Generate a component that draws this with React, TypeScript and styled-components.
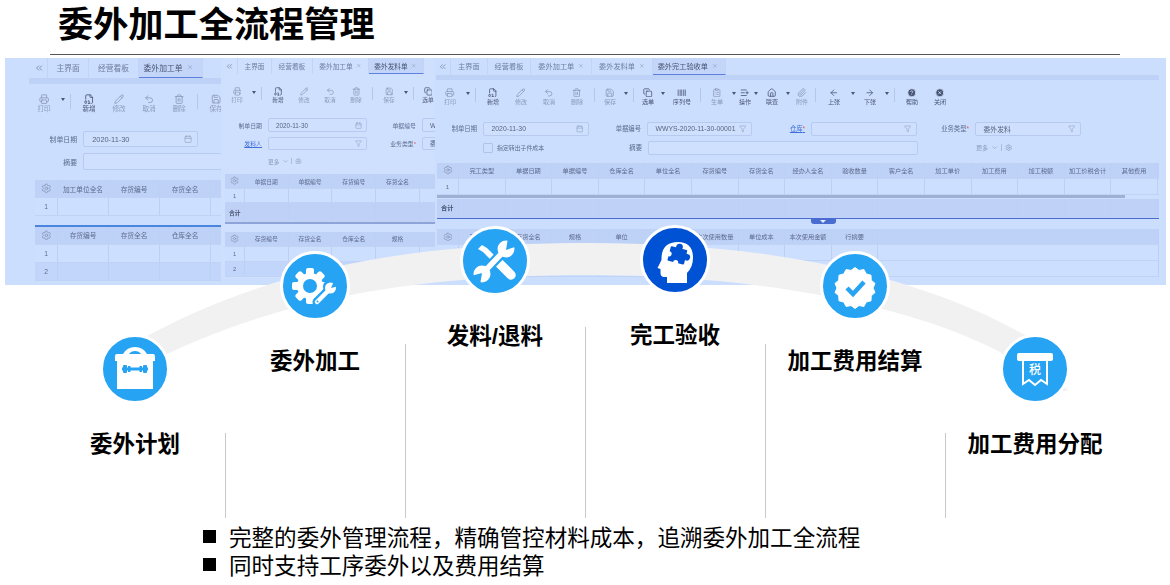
import type { ReactNode } from "react";
import styled, { createGlobalStyle } from "styled-components";
import {
  ArrowLeft,
  ArrowRight,
  Barcode,
  Calendar,
  ChevronDown,
  ChevronsLeft,
  CircleHelp,
  CircleX,
  ClipboardList,
  Copy,
  FileDigit,
  Filter,
  House,
  ListPlus,
  Paperclip,
  Pencil,
  Printer,
  Save,
  Settings,
  Trash2,
  Undo2,
  X,
} from "lucide-react";

const GlobalStyle = createGlobalStyle`
  html, body { margin: 0; padding: 0; background: #fff; }
  body { font-family: "Liberation Sans", "Noto Sans CJK SC", sans-serif; overflow: hidden; }
`;

/* ---------- slide frame ---------- */

const Page = styled.div`
  width: 1170px;
  height: 585px;
  display: flex;
  flex-direction: column;
  color: #000;
`;

const Title = styled.h1`
  margin: 0;
  height: 54px;
  padding-left: 58px;
  font-size: 35.2px;
  line-height: 50px;
  font-weight: 700;
  letter-spacing: 0;
`;

const Rule = styled.div`
  width: 1070px;
  height: 1px;
  margin: 0 0 3px 50px;
  background: #555;
`;

const Stage = styled.div`
  position: relative;
  height: 460px;
`;

const Panel = styled.div`
  position: absolute;
  left: 5px;
  top: 0;
  width: 1161px;
  height: 227px;
  overflow: hidden;
  background: #cbdefe;
  filter: blur(0.35px);
`;

const ArcSvg = styled.svg`
  position: absolute;
  left: 0;
  top: 0;
`;

const Steps = styled.div`
  position: absolute;
  left: 45px;
  top: 0;
  height: 460px;
  display: grid;
  grid-template-columns: repeat(6, 180px);
`;

const Step = styled.div<{ $top: number }>`
  position: relative;
  padding-top: ${(p) => p.$top}px;
  display: flex;
  flex-direction: column;
  align-items: center;
`;

const Divider = styled.div<{ $top: number }>`
  position: absolute;
  left: 0;
  top: ${(p) => p.$top}px;
  bottom: 0;
  width: 1px;
  background: #c9c9c9;
`;

const Badge = styled.div<{ $dark?: boolean }>`
  width: 64px;
  height: 64px;
  box-sizing: content-box;
  border: 3px solid #fff;
  border-radius: 50%;
  background: ${(p) => (p.$dark ? "#0052d4" : "#26a3f2")};
  svg { display: block; }
`;

const StepLabel = styled.div`
  margin-top: 26px;
  height: 30px;
  font-size: 22.5px;
  line-height: 30px;
  font-weight: 700;
  white-space: nowrap;
`;

const Bullets = styled.ul`
  list-style: none;
  margin: 4px 0 0;
  padding: 0 0 0 203px;
`;

const Bullet = styled.li`
  display: flex;
  align-items: center;
  gap: 13px;
  height: 28px;
  font-size: 22.55px;
  white-space: nowrap;
  &::before {
    content: "";
    width: 13px;
    height: 13px;
    background: #000;
  }
`;

/* ---------- software screens behind the diagram ---------- */

const Screen = styled.div<{ $left: number; $width: number; $height: number; $size: number; $pad: number; $bg: string }>`
  position: absolute;
  left: ${(p) => p.$left}px;
  top: 0;
  width: ${(p) => p.$width}px;
  height: ${(p) => p.$height}px;
  overflow: hidden;
  background: ${(p) => p.$bg};
  font-size: ${(p) => p.$size}px;
  color: #5d6c8e;
  padding-left: ${(p) => p.$pad}px;
  box-sizing: border-box;
`;

const TabBar = styled.div<{ $h: number; $pad: number }>`
  display: flex;
  height: ${(p) => p.$h}px;
  margin-left: -${(p) => p.$pad}px;
`;

const TabChevron = styled.div<{ $w: number }>`
  width: ${(p) => p.$w}px;
  flex: none;
  display: flex;
  align-items: center;
  justify-content: flex-end;
  padding-right: 3px;
  box-sizing: border-box;
  color: #7686a6;
  border-right: 1px solid #c2d4f6;
  svg { width: 1.3em; height: 1.3em; }
`;

const Tab = styled.div<{ $active?: boolean; $tabPad: number }>`
  display: flex;
  align-items: center;
  flex: none;
  gap: 0.55em;
  padding: 0 ${(p) => p.$tabPad}px 0 ${(p) => (p.$active ? 5 : p.$tabPad)}px;
  white-space: nowrap;
  border-right: 1px solid #c2d4f6;
  box-sizing: border-box;
  color: ${(p) => (p.$active ? "#46526f" : "#6f7e9e")};
  background: ${(p) => (p.$active ? "#c3d6fa" : "transparent")};
  border-bottom: 1px solid ${(p) => (p.$active ? "#5c80de" : "transparent")};
  svg { width: 0.8em; height: 0.8em; color: #8594b2; }
`;

const Band = styled.div<{ $h: number; $w?: number }>`
  height: ${(p) => p.$h}px;
  width: ${(p) => (p.$w ? `${p.$w}px` : "auto")};
  background: #bed1f6;
`;

const Toolbar = styled.div<{ $mt: number; $h: number }>`
  display: flex;
  align-items: flex-start;
  margin-top: ${(p) => p.$mt}px;
  height: ${(p) => p.$h}px;
`;

const ToolGroup = styled.div`
  display: flex;
  align-items: flex-start;
  flex: none;
`;

const ToolItem = styled.div<{ $w: number; $on?: boolean }>`
  width: ${(p) => p.$w}px;
  flex: none;
  display: flex;
  flex-direction: column;
  align-items: center;
  font-size: 0.85em;
  line-height: 1.15;
  white-space: nowrap;
  color: ${(p) => (p.$on ? "#4a5672" : "#8c9aba")};
  svg { width: 1.55em; height: 1.55em; margin-bottom: 1px; flex: none; }
`;

const ToolCaret = styled.div`
  width: 8px;
  flex: none;
  margin-top: 0.55em;
  display: flex;
  justify-content: center;
  &::before {
    content: "";
    border-left: 2.5px solid transparent;
    border-right: 2.5px solid transparent;
    border-top: 3px solid #4a5672;
  }
`;

const ToolSep = styled.div`
  width: 1px;
  height: 1.9em;
  flex: none;
  margin: 0 3px;
  background: #b4c6ea;
`;

const Form = styled.div<{ $mt: number; $gap: number }>`
  display: flex;
  flex-direction: column;
  gap: ${(p) => p.$gap}px;
  margin-top: ${(p) => p.$mt}px;
`;

const FormRow = styled.div<{ $h: number }>`
  display: flex;
  align-items: center;
  height: ${(p) => p.$h}px;
`;

const FieldLabel = styled.div<{ $w: number; $link?: boolean }>`
  width: ${(p) => p.$w}px;
  flex: none;
  margin-right: 6px;
  text-align: right;
  white-space: nowrap;
  font-size: 0.88em;
  color: ${(p) => (p.$link ? "#3f6fd8" : "#5d6c8e")};
  text-decoration: ${(p) => (p.$link ? "underline" : "none")};
  i { color: #e2574c; font-style: normal; }
`;

const FieldInput = styled.div<{ $w: number }>`
  width: ${(p) => p.$w}px;
  height: 100%;
  flex: none;
  box-sizing: border-box;
  display: flex;
  align-items: center;
  justify-content: space-between;
  padding: 0 0.7em 0 1.1em;
  border: 1px solid #b7caf2;
  border-radius: 2px;
  background: #cfe0fe;
  white-space: nowrap;
  color: #56647f;
  font-size: 0.95em;
  svg { width: 1.1em; height: 1.1em; color: #93a4c6; flex: none; }
`;

const Check = styled.div<{ $ml: number; $w: number }>`
  display: flex;
  align-items: center;
  gap: 4px;
  flex: none;
  margin-left: ${(p) => p.$ml}px;
  width: ${(p) => p.$w}px;
  white-space: nowrap;
  font-size: 0.82em;
  &::before {
    content: "";
    width: 8px;
    height: 8px;
    border: 1px solid #b0c3ea;
    border-radius: 1px;
  }
`;

const More = styled.div<{ $ml: number }>`
  display: flex;
  align-items: center;
  gap: 0.45em;
  margin-left: ${(p) => p.$ml}px;
  font-size: 0.85em;
  color: #8c9aba;
  white-space: nowrap;
  svg { width: 1.2em; height: 1.2em; }
  span { width: 1px; height: 1.2em; background: #a9bbe2; }
`;

const TableWrap = styled.div<{ $mt: number; $ml: number; $w: number }>`
  position: relative;
  margin-top: ${(p) => p.$mt}px;
  margin-left: ${(p) => p.$ml}px;
  width: ${(p) => p.$w}px;
`;

const Row = styled.div<{ $h: number; $kind: "head" | "plain" | "alt" | "sum" }>`
  display: flex;
  height: ${(p) => p.$h}px;
  background: ${(p) =>
    p.$kind === "head" ? "#bed1f7" : p.$kind === "plain" ? "#cddffe" : p.$kind === "alt" ? "#c2d5fa" : "#bfd1f6"};
  border-bottom: 1px solid #c0d3f7;
  box-sizing: border-box;
  font-size: 0.86em;
`;

const Cell = styled.div<{ $w: number; $left?: boolean }>`
  width: ${(p) => p.$w}px;
  flex: none;
  box-sizing: border-box;
  display: flex;
  align-items: center;
  justify-content: ${(p) => (p.$left ? "flex-start" : "center")};
  padding-left: ${(p) => (p.$left ? "4px" : "0")};
  border-right: 1px solid #bccff5;
  white-space: nowrap;
  overflow: visible;
  svg { width: 1.6em; height: 1.6em; color: #7d8cab; }
  b { color: #46526f; }
`;

const ScrollTrack = styled.div`
  height: 4px;
  background: #cddffe;
`;

const ScrollThumb = styled.div<{ $w: number }>`
  width: ${(p) => p.$w}px;
  height: 3px;
  background: #9fb0d4;
`;

const SplitLine = styled.div<{ $color: string }>`
  position: relative;
  height: 1.5px;
  background: ${(p) => p.$color};
`;

const SplitHandle = styled.div`
  position: absolute;
  left: 374px;
  top: 1px;
  width: 25px;
  height: 5px;
  background: #4a6bd0;
  border-radius: 0 0 3px 3px;
  &::after {
    content: "";
    position: absolute;
    left: 9px;
    top: 1px;
    border-left: 3px solid transparent;
    border-right: 3px solid transparent;
    border-top: 3px solid #e6eeff;
  }
`;

/* ---------- small helpers ---------- */

type ToolDef = { label: string; icon: ReactNode; w: number; on?: boolean; caret?: boolean } | "sep";

const print = { label: "打印", icon: <Printer /> };
const add = { label: "新增", icon: <FileDigit />, on: true };
const edit = { label: "修改", icon: <Pencil /> };
const undo = { label: "取消", icon: <Undo2 /> };
const del = { label: "删除", icon: <Trash2 /> };
const save = { label: "保存", icon: <Save /> };
const pick = { label: "选单", icon: <Copy />, on: true };

const Tools = ({ items, mt, h }: { items: ToolDef[]; mt: number; h: number }) => (
  <Toolbar $mt={mt} $h={h}>
    {items.map((t, i) =>
      t === "sep" ? (
        <ToolSep key={i} />
      ) : (
        <ToolGroup key={i}>
          <ToolItem $w={t.w} $on={t.on}>
            {t.icon}
            {t.label}
          </ToolItem>
          {t.caret && <ToolCaret />}
        </ToolGroup>
      )
    )}
  </Toolbar>
);

const Tabs = ({
  names,
  active,
  h,
  chevron,
  tabPad,
  pad,
}: {
  names: string[];
  active: string;
  h: number;
  chevron: number;
  tabPad: number;
  pad: number;
}) => (
  <TabBar $h={h} $pad={pad}>
    <TabChevron $w={chevron}>
      <ChevronsLeft />
    </TabChevron>
    {names.map((n, i) => (
      <Tab key={n} $active={n === active} $tabPad={tabPad}>
        {n}
        {i > 1 && <X />}
      </Tab>
    ))}
  </TabBar>
);

const Field = ({
  label,
  lw,
  iw,
  value,
  icon,
  link,
  required,
}: {
  label: string;
  lw: number;
  iw: number;
  value?: string;
  icon?: ReactNode;
  link?: boolean;
  required?: boolean;
}) => (
  <>
    <FieldLabel $w={lw} $link={link}>
      {label}
      {required && <i>*</i>}
    </FieldLabel>
    <FieldInput $w={iw}>
      <span>{value}</span>
      {icon}
    </FieldInput>
  </>
);

type RowDef = { h: number; kind: "plain" | "alt" | "sum"; label?: string };

const DataTable = ({
  cols,
  gearW,
  colW,
  headH,
  rows,
  fill,
}: {
  cols: string[];
  gearW: number;
  colW: number;
  headH: number;
  rows: RowDef[];
  fill: number;
}) => (
  <>
    <Row $h={headH} $kind="head">
      <Cell $w={gearW}>
        <Settings strokeWidth={1.5} />
      </Cell>
      {cols.map((c, i) => (
        <Cell key={i} $w={colW}>
          {c}
        </Cell>
      ))}
      {fill > 0 && <Cell $w={fill} />}
    </Row>
    {rows.map((r, i) => (
      <Row key={i} $h={r.h} $kind={r.kind}>
        <Cell $w={gearW} $left={r.kind === "sum"}>
          {r.kind === "sum" ? <b>{r.label}</b> : r.label}
        </Cell>
        {cols.map((_, j) => (
          <Cell key={j} $w={colW} />
        ))}
        {fill > 0 && <Cell $w={fill} />}
      </Row>
    ))}
  </>
);

const FirstScreen = () => (
  <Screen $left={0} $width={216} $height={227} $size={7.8} $pad={24} $bg="#cbdefe">
    <Tabs names={["主界面", "经营看板", "委外加工单"]} active="委外加工单" h={20} chevron={43} tabPad={8.5} pad={24} />
    <Band $h={6} />
    <Tools
      mt={10}
      h={22}
      items={[
        { ...print, w: 30, caret: true },
        "sep",
        { ...add, w: 30 },
        { ...edit, w: 30 },
        { ...undo, w: 30 },
        { ...del, w: 30 },
        "sep",
        { ...save, w: 30 },
      ]}
    />
    <Form $mt={15} $gap={6}>
      <FormRow $h={16}>
        <Field label="制单日期" lw={48} iw={115} value="2020-11-30" icon={<Calendar />} />
      </FormRow>
      <FormRow $h={17}>
        <Field label="摘要" lw={48} iw={200} />
      </FormRow>
    </Form>
    <TableWrap $mt={10} $ml={6} $w={300}>
      <DataTable
        cols={["加工单位全名", "存货编号", "存货全名", "仓库全名"]}
        gearW={23}
        colW={51}
        headH={18}
        fill={0}
        rows={[{ h: 18, kind: "plain", label: "1" }]}
      />
    </TableWrap>
    <TableWrap $mt={9} $ml={6} $w={300}>
      <SplitLine $color="#4a86e0" />
      <DataTable
        cols={["存货编号", "存货全名", "仓库全名", "规格"]}
        gearW={23}
        colW={51}
        headH={18}
        fill={0}
        rows={[
          { h: 18, kind: "plain", label: "1" },
          { h: 18, kind: "alt", label: "2" },
        ]}
      />
    </TableWrap>
  </Screen>
);

const SecondScreen = () => (
  <Screen $left={216} $width={214} $height={220} $size={6.7} $pad={3} $bg="#cfe0ff">
    <Tabs
      names={["主界面", "经营看板", "委外加工单", "委外发料单"]}
      active="委外发料单"
      h={16}
      chevron={17}
      tabPad={6.5}
      pad={3}
    />
    <Tools
      mt={13}
      h={18}
      items={[
        { ...print, w: 26, caret: true },
        "sep",
        { ...add, w: 26 },
        { ...edit, w: 26 },
        { ...undo, w: 26 },
        { ...del, w: 26 },
        "sep",
        { ...save, w: 26, caret: true },
        "sep",
        { ...pick, w: 22 },
      ]}
    />
    <Form $mt={13} $gap={5}>
      <FormRow $h={14}>
        <Field label="制单日期" lw={38} iw={99} value="2020-11-30" icon={<Calendar />} />
        <Field label="单据编号" lw={49} iw={60} value="W" />
      </FormRow>
      <FormRow $h={13}>
        <Field label="发料人" lw={38} iw={99} link icon={<Filter />} />
        <Field label="业务类型" lw={49} iw={60} value="委" required />
      </FormRow>
    </Form>
    <Form $mt={5} $gap={0}>
      <FormRow $h={12}>
        <More $ml={44}>
          更多 <ChevronDown /> <span /> <Settings />
        </More>
      </FormRow>
    </Form>
    <TableWrap $mt={7} $ml={1} $w={240}>
      <DataTable
        cols={["单据日期", "单据编号", "存货编号", "存货全名", "仓库"]}
        gearW={20}
        colW={43.7}
        headH={15}
        fill={0}
        rows={[
          { h: 14, kind: "plain", label: "1" },
          { h: 19, kind: "sum", label: "合计" },
        ]}
      />
      <SplitLine $color="#8ea4d8" />
    </TableWrap>
    <TableWrap $mt={8} $ml={1} $w={240}>
      <DataTable
        cols={["存货编号", "存货全名", "仓库全名", "规格", "单位"]}
        gearW={20}
        colW={43.7}
        headH={15}
        fill={0}
        rows={[
          { h: 15, kind: "plain", label: "1" },
          { h: 15, kind: "alt", label: "2" },
        ]}
      />
    </TableWrap>
  </Screen>
);

const ThirdScreen = () => (
  <Screen $left={430} $width={731} $height={227} $size={7.2} $pad={1} $bg="#cbdefe">
    <Tabs
      names={["主界面", "经营看板", "委外加工单", "委外发料单", "委外完工验收单"]}
      active="委外完工验收单"
      h={17}
      chevron={16}
      tabPad={7}
      pad={1}
    />
    <Band $h={5} $w={723} />
    <Tools
      mt={8}
      h={19}
      items={[
        { ...print, w: 28, caret: true },
        "sep",
        { ...add, w: 28 },
        { ...edit, w: 28 },
        { ...undo, w: 28 },
        { ...del, w: 28 },
        "sep",
        { ...save, w: 24, caret: true },
        "sep",
        { ...pick, w: 22, caret: true },
        { label: "序列号", icon: <Barcode />, w: 30, on: true },
        "sep",
        { label: "生单", icon: <ClipboardList />, w: 26, caret: true },
        { label: "操作", icon: <ListPlus />, w: 14, on: true, caret: true },
        { label: "联查", icon: <House />, w: 24, on: true, caret: true },
        { label: "附件", icon: <Paperclip />, w: 20 },
        "sep",
        { label: "上张", icon: <ArrowLeft />, w: 30, on: true, caret: true },
        { label: "下张", icon: <ArrowRight />, w: 26, on: true, caret: true },
        "sep",
        { label: "帮助", icon: <CircleHelp fill="#47536f" color="#cbdefe" />, w: 28, on: true },
        { label: "关闭", icon: <CircleX fill="#47536f" color="#cbdefe" />, w: 28, on: true },
      ]}
    />
    <Form $mt={15} $gap={5.5}>
      <FormRow $h={13.5}>
        <Field label="制单日期" lw={41} iw={106} value="2020-11-30" icon={<Calendar />} />
        <Field label="单据编号" lw={52} iw={105} value="WWYS-2020-11-30-00001" icon={<Filter />} />
        <Field label="仓库" lw={53} iw={106} link required icon={<Filter />} />
        <Field label="业务类型" lw={52} iw={106} value="委外发料" required icon={<Filter />} />
      </FormRow>
      <FormRow $h={13.5}>
        <Check $ml={47} $w={106}>
          指定转出子件成本
        </Check>
        <Field label="摘要" lw={53} iw={270} />
        <More $ml={58}>
          更多 <ChevronDown /> <span /> <Settings />
        </More>
      </FormRow>
    </Form>
    <TableWrap $mt={8} $ml={1} $w={722}>
      <DataTable
        cols={[
          "完工类型",
          "单据日期",
          "单据编号",
          "仓库全名",
          "单位全名",
          "存货编号",
          "存货全名",
          "经办人全名",
          "验收数量",
          "客户全名",
          "加工单价",
          "加工费用",
          "加工税额",
          "加工价税合计",
          "其他费用",
        ]}
        gearW={22}
        colW={46.6}
        headH={16}
        fill={0}
        rows={[{ h: 16, kind: "plain", label: "1" }]}
      />
      <ScrollTrack>
        <ScrollThumb $w={688} />
      </ScrollTrack>
      <Row $h={19} $kind="sum">
        <Cell $w={22} $left>
          <b>合计</b>
        </Cell>
        {Array.from({ length: 15 }, (_, j) => (
          <Cell key={j} $w={46.6} />
        ))}
      </Row>
      <SplitLine $color="#4a6bd0">
        <SplitHandle />
      </SplitLine>
    </TableWrap>
    <TableWrap $mt={10} $ml={1} $w={722}>
      <DataTable
        cols={["存货编号", "存货全名", "规格", "单位", "", "本次使用数量", "单位成本", "本次使用金额", "行摘要"]}
        gearW={22}
        colW={46.6}
        headH={16}
        fill={281}
        rows={[{ h: 16, kind: "plain" }, { h: 16, kind: "plain" }]}
      />
    </TableWrap>
  </Screen>
);

/* ---------- step icons ---------- */

const BLUE = "#26a3f2";
const DEEP = "#0052d4";

const teeth = Array.from({ length: 8 }, (_, i) => i * 45);

const burst = Array.from({ length: 28 }, (_, i) => {
  const a = (i / 28) * Math.PI * 2;
  const r = i % 2 ? 18 : 20.5;
  return `${33 + r * Math.sin(a)},${35 - r * Math.cos(a)}`;
}).join(" ");

const IconFrame = ({ children }: { children: ReactNode }) => (
  <svg width="64" height="64" viewBox="1 1 64 64">
    {children}
  </svg>
);

const ToolboxIcon = () => (
  <IconFrame>
    <path
      d="M13 20 Q13 18 15 18 H21 Q25 11 33 11 Q41 11 45 18 H51 Q53 18 53 20 V25 H51 V53 H15 V25 H13 Z"
      fill="#fff"
    />
    <path d="M27 18 Q29 15 33 15 Q37 15 39 18 Z" fill={BLUE} />
    <rect x="20" y="31.5" width="26" height="3" fill={BLUE} />
    <rect x="21" y="29" width="4" height="8" rx="1" fill={BLUE} />
    <rect x="26" y="30" width="2.5" height="6" fill={BLUE} />
    <rect x="37.5" y="30" width="2.5" height="6" fill={BLUE} />
    <rect x="41" y="29" width="4" height="8" rx="1" fill={BLUE} />
  </IconFrame>
);

const GearIcon = () => (
  <IconFrame>
    <g fill="#fff">
      {teeth.map((a) => (
        <rect key={a} x="24" y="15" width="8" height="8" rx="2" transform={`rotate(${a} 28 33)`} />
      ))}
      <circle cx="28" cy="33" r="13" />
    </g>
    <circle cx="28" cy="33" r="7" fill={BLUE} />
    <path d="M35 49 L47 37" stroke={BLUE} strokeWidth="9" strokeLinecap="round" />
    <circle cx="49" cy="34" r="8" fill={BLUE} />
    <path d="M35 49 L46 38" stroke="#fff" strokeWidth="4.5" strokeLinecap="round" />
    <circle cx="48.5" cy="35" r="5.5" fill="#fff" />
    <path d="M49 35 L52 28 L57 33 Z" fill={BLUE} />
    <circle cx="35.5" cy="48.5" r="1" fill={BLUE} />
  </IconFrame>
);

const ToolsIcon = () => (
  <IconFrame>
    <path d="M16 21 L20 17 L25 20 L38 33 L34 37 L21 24 Z" fill="#fff" />
    <path d="M38 36 L49 47" stroke="#fff" strokeWidth="9.5" strokeLinecap="round" />
    <path d="M20 46 L44 21" stroke={BLUE} strokeWidth="10" />
    <path d="M21 45 L43 22" stroke="#fff" strokeWidth="5.5" />
    <circle cx="44" cy="21" r="8.5" fill="#fff" />
    <path d="M44 22 L46 10 L56 18 Z" fill={BLUE} />
    <circle cx="20" cy="46" r="8.5" fill="#fff" />
    <path d="M20 45 L18 57 L9 48 Z" fill={BLUE} />
  </IconFrame>
);

const HeadIcon = () => (
  <IconFrame>
    <path
      d="M25 56 V50 H21.5 Q18.5 49.5 18.5 46 V42 L15.5 41 L19.5 33 Q19 15 36 15 Q51 15 51 31 Q51 40 45 46 V56 Z"
      fill="#fff"
    />
    <g transform="rotate(14 36 28)">
      <g fill={DEEP}>
        <rect x="27" y="21" width="17" height="15" rx="1" />
        <circle cx="35.5" cy="20" r="3.4" />
        <circle cx="45" cy="28" r="3.4" />
      </g>
      <circle cx="27" cy="29" r="2.6" fill="#fff" />
      <circle cx="35.5" cy="36" r="2.6" fill="#fff" />
    </g>
  </IconFrame>
);

const CheckBadgeIcon = () => (
  <IconFrame>
    <polygon points={burst} fill="#fff" stroke="#fff" strokeWidth="1" strokeLinejoin="round" />
    <path d="M25 35 L31 41 L42 29" fill="none" stroke={BLUE} strokeWidth="4.5" />
  </IconFrame>
);

const TaxIcon = () => (
  <IconFrame>
    <rect x="15" y="17" width="36" height="8" rx="2" fill="#fff" />
    <path
      d="M21 25 V48 L27 44 L33 49 L39 44 L45 48 V25"
      fill="none"
      stroke="#fff"
      strokeWidth="2"
    />
    <text x="33" y="38" fontSize="12" fontWeight="500" fill="#fff" textAnchor="middle" fontFamily="Noto Sans CJK SC">
      税
    </text>
  </IconFrame>
);

const steps = [
  { label: "委外计划", top: 276, icon: <ToolboxIcon /> },
  { label: "委外加工", top: 193, line: 375, icon: <GearIcon /> },
  { label: "发料/退料", top: 168, line: 286, icon: <ToolsIcon /> },
  { label: "完工验收", top: 167, line: 269, icon: <HeadIcon />, dark: true },
  { label: "加工费用结算", top: 193, line: 286, icon: <CheckBadgeIcon /> },
  { label: "加工费用分配", top: 276, line: 375, icon: <TaxIcon /> },
];

export default function App() {
  return (
    <Page>
      <GlobalStyle />
      <Title>委外加工全流程管理</Title>
      <Rule />
      <Stage>
        <Panel>
          <FirstScreen />
          <SecondScreen />
          <ThirdScreen />
        </Panel>
        <ArcSvg width="1170" height="460" viewBox="0 58 1170 460">
          <path
            d="M140 340 C 280 262, 430 243, 590 243 C 740 243, 900 265, 1025 335 L 1068 391 L 1040 391 L 1000 352 C 900 300, 740 275, 590 275 C 430 275, 290 295, 165 355 Z"
            fill="#f1f1f1"
          />
        </ArcSvg>
        <Steps>
          {steps.map((s) => (
            <Step key={s.label} $top={s.top}>
              {s.line !== undefined && <Divider $top={s.line} />}
              <Badge $dark={s.dark}>{s.icon}</Badge>
              <StepLabel>{s.label}</StepLabel>
            </Step>
          ))}
        </Steps>
      </Stage>
      <Bullets>
        <Bullet>完整的委外管理流程，精确管控材料成本，追溯委外加工全流程</Bullet>
        <Bullet>同时支持工序委外以及费用结算</Bullet>
      </Bullets>
    </Page>
  );
}
